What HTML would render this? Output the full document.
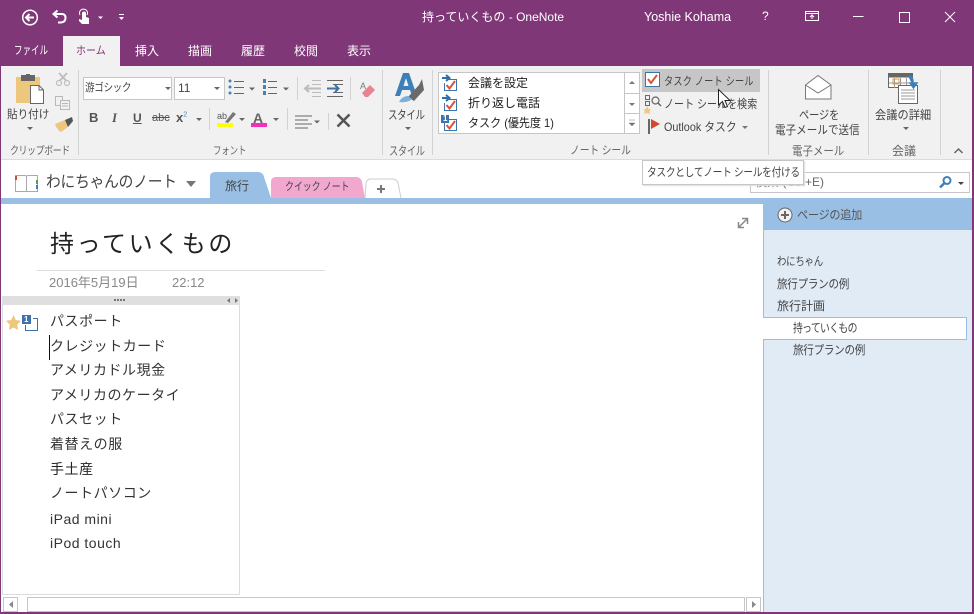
<!DOCTYPE html>
<html lang="ja"><head><meta charset="utf-8"><style>
html,body{margin:0;padding:0;width:974px;height:614px;overflow:hidden;background:#fff}
body{position:relative;font-family:"Liberation Sans","Noto Sans CJK JP",sans-serif;font-size:12px;color:#444}
.a{position:absolute}
.t{position:absolute;white-space:nowrap;line-height:16px;transform-origin:0 50%}
.w{color:#fff}
.g{color:#666}
.sep{position:absolute;width:1px;background:#d2d2d2}
.note{position:absolute;left:50px;white-space:nowrap;font-size:14px;letter-spacing:.55px;line-height:20px;color:#333}
.arr{position:absolute;width:0;height:0;border-left:3px solid transparent;border-right:3px solid transparent;border-top:3px solid #666}
svg{position:absolute;overflow:visible}
</style></head><body>
<!-- title bar -->
<div class="a" style="left:0;top:0;width:974px;height:66px;background:#803778"></div>
<div class="a" style="left:0;top:0;width:1px;height:614px;background:#803778;z-index:9"></div>
<div class="a" style="left:972px;top:0;width:2px;height:614px;background:#803778;z-index:9"></div>
<div class="a" style="left:0;top:612px;width:974px;height:2px;background:#803778;z-index:9"></div>
<svg style="left:0;top:0" width="140" height="36" fill="none" stroke="#fff">
<circle cx="30" cy="17.500" r="7.300" stroke-width="1.500"/>
<path d="M34 17.500H26M29.500 14L26 17.500L29.500 21" stroke-width="2"/>
<path d="M54 14H62Q65.500 14 65.500 18Q65.500 22 61 22.500H58M57.500 10.500L53.500 14L57.500 17.500" stroke-width="2"/>
<path d="M82 20V13.500a2 2 0 0 1 4 0V17L89 18V24H82L79 21V19Z" fill="#fff" stroke="none"/>
<path d="M80 15A4 4 0 1 1 87 15" stroke-width="1"/>
<path d="M98 16.500H103L100.500 19Z" fill="#fff" stroke="none"/>
<path d="M119 14.500H124" stroke-width="1"/><path d="M119 17H124L121.500 20Z" fill="#fff" stroke="none"/>
</svg>
<div class="t w" style="left:422px;top:9px;font-size:12px">持っていくもの - OneNote</div>
<div class="t w" style="left:644px;top:9px;font-size:12.500px">Yoshie Kohama</div>
<div class="t w" style="left:762px;top:8px;font-size:12px">?</div>
<svg style="left:800px;top:8px" width="170" height="20" fill="none" stroke="#fff" stroke-width="1">
<path d="M5.500 3.500H18.500V12.500H5.500ZM5.500 5.500H18.500M12 11V7M10 9L12 7L14 9"/>
<path d="M53 8.500H63.500"/>
<path d="M99.500 4.500H109.500V14.500H99.500Z"/>
<path d="M145 4L155 14M155 4L145 14"/>
</svg>
<!-- ribbon tabs -->
<div class="a" style="left:63px;top:36px;width:57px;height:30px;background:#f1f1f1"></div>
<div class="t w" style="left:14px;top:43px;font-size:11.500px;transform:scaleX(.74)">ファイル</div>
<div class="t" style="left:76px;top:43px;font-size:11px;color:#803778;transform:scaleX(.91)">ホーム</div>
<div class="t w" style="left:135px;top:43px">挿入</div>
<div class="t w" style="left:188px;top:43px">描画</div>
<div class="t w" style="left:241px;top:43px">履歴</div>
<div class="t w" style="left:294px;top:43px">校閲</div>
<div class="t w" style="left:347px;top:43px">表示</div>
<!-- ribbon -->
<div class="a" style="left:1px;top:66px;width:971px;height:93px;background:#f1f1f1"></div>
<div class="a" style="left:1px;top:159px;width:971px;height:1px;background:#dcdcdc"></div>
<div class="sep" style="left:78px;top:70px;height:85px"></div>
<div class="sep" style="left:382px;top:70px;height:85px"></div>
<div class="sep" style="left:432px;top:70px;height:85px"></div>
<div class="sep" style="left:768px;top:70px;height:85px"></div>
<div class="sep" style="left:868px;top:70px;height:85px"></div>
<div class="sep" style="left:940px;top:70px;height:85px"></div>
<!-- clipboard -->
<svg style="left:0;top:66px" width="80" height="70" fill="none">
<rect x="16" y="11" width="24" height="26" fill="#eec77f"/>
<rect x="21" y="9" width="14" height="6" fill="#666"/><rect x="26" y="8" width="4" height="3" fill="#666"/>
<path d="M30.500 19.500H39L43.500 24V37.500H30.500Z" fill="#fff" stroke="#666"/>
<path d="M39 19.500V24H43.500" stroke="#666"/>
<g stroke="#bdbdbd" stroke-width="1.200"><circle cx="59" cy="17" r="2.500"/><circle cx="67" cy="17" r="2.500"/><path d="M60 14.500L67 7M66 14.500L59 7" stroke-width="1.800"/></g>
<g stroke="#b8b8b8"><rect x="55.500" y="30.500" width="7" height="9"/><path d="M60.500 34.500H69.500V43.500H60.500Z" fill="#f1f1f1"/><path d="M62 37.500H68M62 40H68"/></g>
<path d="M55 58L65 54L68 61L61 66Q57 64 55 58Z" fill="#eec77f"/>
<path d="M65 54L72 51L73 55L68 61Z" fill="#555"/>
</svg>
<div class="t" style="left:7px;top:107px;font-size:11.500px;color:#444;transform:scaleX(.92)">貼り付け</div>
<div class="arr" style="left:27px;top:127px"></div>
<div class="t g" style="left:10px;top:143px;font-size:11px;letter-spacing:-.6px;transform:scaleX(.82)">クリップボード</div>
<!-- font -->
<div class="a" style="left:83px;top:77px;width:89px;height:23px;border:1px solid #c6c6c6;background:#fff;box-sizing:border-box"></div>
<div class="a" style="left:174px;top:77px;width:51px;height:23px;border:1px solid #c6c6c6;background:#fff;box-sizing:border-box"></div>
<div class="t" style="left:85px;top:80px;font-size:11px;letter-spacing:-.4px;color:#444;transform:scaleX(.87)">游ゴシック</div>
<div class="t" style="left:178px;top:80px;font-size:12px">11</div>
<div class="arr" style="left:165px;top:87px"></div><div class="arr" style="left:214px;top:87px"></div>
<svg style="left:225px;top:70px" width="160" height="68" fill="none" stroke="#666">
<path d="M9 11.500H19M9 17.500H19M9 23.500H19"/>
<g fill="#4a7fb5" stroke="none"><circle cx="5" cy="11" r="1.500"/><circle cx="5" cy="17" r="1.500"/><circle cx="5" cy="23" r="1.500"/>
<rect x="38" y="9" width="3" height="4"/><rect x="38" y="15" width="3" height="4"/><rect x="38" y="21" width="3" height="4"/></g>
<path d="M43 11.500H52M43 17.500H52M43 23.500H52"/>
<path d="M24 17.500H30L27 20.500ZM58 17.500H64L61 20.500Z" fill="#666" stroke="none"/>
<path d="M72.500 7V30" stroke="#d2d2d2"/>
<path d="M87 10.500H96M87 14.500H96M87 22.500H96M87 26.500H96" stroke="#bbb"/>
<path d="M80 18.500H96M84 15L80 18.500L84 22" stroke="#bbb" stroke-width="2"/>
<path d="M102 10.500H118M108 14.500H118M108 22.500H118M102 26.500H118"/>
<path d="M102 18.500H113M110 15L113.500 18.500L110 22" stroke="#3a74ad" stroke-width="2"/>
<path d="M125.500 7V30" stroke="#d2d2d2"/>
<path d="M137 23L145 15L150 20L143 27H140Z" fill="#e8838f" stroke="none"/>
<path d="M70 46H87M70 50H83M70 54H87M70 58H83"/>
<path d="M89 50.500H95L92 53.500Z" fill="#666" stroke="none"/>
<path d="M103.500 43V60" stroke="#d2d2d2"/>
<path d="M112.500 44.500L124.500 56.500M124.500 44.500L112.500 56.500" stroke="#555" stroke-width="2.500"/>
</svg>
<div class="t" style="left:360px;top:78px;font-size:9px;color:#777">A</div>
<div class="t" style="left:89px;top:110px;font-size:13px;font-weight:bold;color:#555">B</div>
<div class="t" style="left:112px;top:110px;font-size:13px;font-style:italic;font-family:'Liberation Serif',serif;font-weight:bold;color:#555">I</div>
<div class="t" style="left:133px;top:110px;font-size:12px;font-weight:bold;text-decoration:underline;color:#555">U</div>
<div class="t" style="left:152px;top:110px;font-size:11px;text-decoration:line-through;color:#555">abc</div>
<div class="t" style="left:176px;top:110px;font-size:13px;font-weight:bold;color:#555">x<sup style="font-size:7px;color:#4a7fb5;font-weight:normal;line-height:0">2</sup></div>
<div class="arr" style="left:196px;top:118px"></div>
<div class="sep" style="left:209px;top:108px;height:22px"></div>
<div class="t" style="left:217px;top:108px;font-size:9px;color:#555">ab</div>
<svg style="left:217px;top:108px" width="20" height="18"><path d="M8 14L16 4L19 6L11 15Z" fill="#777"/></svg>
<div class="a" style="left:217px;top:123px;width:16px;height:4px;background:#ff0"></div>
<div class="arr" style="left:239px;top:118px"></div>
<div class="t" style="left:253px;top:110px;font-size:14px;font-weight:bold;color:#666">A</div>
<div class="a" style="left:251px;top:123px;width:16px;height:4px;background:#f72cbe"></div>
<div class="arr" style="left:273px;top:118px"></div>
<div class="sep" style="left:287px;top:108px;height:22px"></div>
<div class="t g" style="left:213px;top:143px;font-size:11px;letter-spacing:-.2px;transform:scaleX(.77)">フォント</div>
<!-- style -->
<svg style="left:394px;top:70px" width="36" height="36">
<path d="M1 26L9 3H15L23 26H18L16 20H8L6 26ZM9.500 16H14.500L12 8Z" fill="#3f7fb8"/>
<path d="M14 27L25 15L28 9L30 20L20 31Z" fill="#6a6a6a"/>
<path d="M5 32Q8 26 14 26L18 29Q14 33 5 32Z" fill="#7ab0dc"/></svg>
<div class="t" style="left:388px;top:107px;font-size:12px;letter-spacing:-.4px;color:#444;transform:scaleX(.79)">スタイル</div>
<div class="arr" style="left:405px;top:127px"></div>
<div class="t g" style="left:389px;top:143px;font-size:12px;letter-spacing:-.4px;transform:scaleX(.77)">スタイル</div>
<!-- tags gallery -->
<div class="a" style="left:438px;top:72px;width:202px;height:62px;background:#fff;border:1px solid #c6c6c6;box-sizing:border-box"></div>
<div class="a" style="left:624px;top:72px;width:16px;height:62px;border-left:1px solid #c6c6c6;box-sizing:border-box"></div>
<div class="a" style="left:624px;top:93px;width:16px;height:1px;background:#c6c6c6"></div>
<div class="a" style="left:624px;top:113px;width:16px;height:1px;background:#c6c6c6"></div>
<svg style="left:438px;top:72px" width="202" height="62" fill="none">
<g><path d="M10 7.500H18.500V18.500H6.500V11" stroke="#3a74ad"/><path d="M8.500 13L11.500 16.500L17 9" stroke="#d9533a" stroke-width="2"/><path d="M4 6H11M8 3L11.500 6L8 9" stroke="#2f6fa8" stroke-width="2"/></g>
<g transform="translate(0,20)"><path d="M10 7.500H18.500V18.500H6.500V11" stroke="#3a74ad"/><path d="M8.500 13L11.500 16.500L17 9" stroke="#d9533a" stroke-width="2"/><path d="M4 6H11M8 3L11.500 6L8 9" stroke="#2f6fa8" stroke-width="2"/></g>
<g transform="translate(0,40)"><path d="M10 7.500H18.500V18.500H6.500V11" stroke="#3a74ad"/><path d="M8.500 13L11.500 16.500L17 9" stroke="#d9533a" stroke-width="2"/><rect x="3" y="3" width="8" height="8" fill="#3f72ad"/></g>
<path d="M191 12L194 9L197 12Z" fill="#777"/><path d="M191 31H197L194 34Z" fill="#777"/>
<path d="M191 48H197M191 51H197L194 54Z" stroke="#777" stroke-width=".5" fill="#777"/>
</svg>
<div class="t" style="left:443px;top:111px;font-size:8px;font-weight:bold;color:#fff">1</div>
<div class="t" style="left:468px;top:75px;font-size:12px;color:#222">会議を設定</div>
<div class="t" style="left:468px;top:95px;font-size:12px;color:#222">折り返し電話</div>
<div class="t" style="left:468px;top:115px;font-size:12px;color:#222;transform:scaleX(.92)">タスク (優先度 1)</div>
<div class="t g" style="left:570px;top:143px;font-size:11.500px;letter-spacing:-.1px;transform:scaleX(.85)">ノート シール</div>
<!-- tags buttons -->
<div class="a" style="left:642px;top:69px;width:118px;height:23px;background:#c6c6c6"></div>
<svg style="left:642px;top:69px" width="22" height="22"><rect x="3.500" y="3.500" width="14" height="14" fill="#fff" stroke="#3a74ad"/><path d="M6 10L9 14L15 6" fill="none" stroke="#d9533a" stroke-width="2"/></svg>
<div class="t" style="left:664px;top:74px;font-size:11.500px;letter-spacing:.2px;transform:scaleX(.8)">タスク ノート シール</div>
<svg style="left:644px;top:94px" width="20" height="20" fill="none"><rect x="1.500" y="1.500" width="4" height="4" stroke="#3a74ad"/><rect x="1.500" y="7.500" width="4" height="4" stroke="#3a74ad"/><path d="M3 12L4.500 15L7 15.500L5.500 17.500L6 20L3 19L0 20L1 17.500L-.5 15.500L2 15Z" fill="#eec77f"/><circle cx="11.500" cy="6.500" r="3.500" stroke="#666" stroke-width="1.200"/><path d="M14 9L17 12" stroke="#666" stroke-width="1.500"/></svg>
<div class="t" style="left:664px;top:96px;font-size:12px;letter-spacing:.1px;transform:scaleX(.83)">ノート シールを検索</div>
<svg style="left:648px;top:118px" width="16" height="18"><rect x="0" y="1" width="2" height="15" fill="#666"/><path d="M3 1L12 6L3 11Z" fill="#d2492f"/></svg>
<div class="t" style="left:664px;top:119px;font-size:12px;transform:scaleX(.9)">Outlook タスク</div>
<div class="arr" style="left:742px;top:126px;border-top-color:#777"></div>
<!-- email -->
<svg style="left:804px;top:74px" width="30" height="28" fill="none" stroke="#777"><path d="M1.500 11L14 1.500L27 11V25H1.500Z" fill="#fff"/><path d="M1.500 11L14 19L27 11"/></svg>
<div class="t" style="left:799px;top:107px;font-size:12px;letter-spacing:-.1px;transform:scaleX(.85)">ページを</div>
<div class="t" style="left:775px;top:122px;font-size:11.800px;letter-spacing:.1px;transform:scaleX(.89)">電子メールで送信</div>
<div class="t g" style="left:792px;top:143px;font-size:12px;transform:scaleX(.87)">電子メール</div>
<!-- meeting -->
<svg style="left:888px;top:73px" width="32" height="32" fill="none"><rect x=".5" y=".5" width="24" height="14" fill="#fff" stroke="#666"/><rect x=".5" y=".5" width="24" height="4" fill="#666"/><path d="M6.500 5V15M12.500 5V15M18.500 5V15M1 10H24" stroke="#999"/><rect x="5" y="6" width="6" height="5" stroke="#e59a3c"/><rect x="10.500" y="12.500" width="19" height="18" fill="#fff" stroke="#666"/><path d="M13 17H27M13 20H27M13 23H27M13 26H27" stroke="#999"/><path d="M20 3Q25 3 25 9V13M22 10L25.500 15L29 10Z" fill="#3f7fb8" stroke="#3f7fb8" stroke-width="1.500"/></svg>
<div class="t" style="left:875px;top:107px;font-size:12px;letter-spacing:.1px;transform:scaleX(.93)">会議の詳細</div>
<div class="arr" style="left:903px;top:127px"></div>
<div class="t g" style="left:892px;top:143px;font-size:12px">会議</div>
<svg style="left:953px;top:146px" width="14" height="10" fill="none"><path d="M1.500 7L5.500 3L9.500 7" stroke="#666" stroke-width="1.500"/></svg>
<!-- notebook bar -->
<svg style="left:15px;top:174px" width="24" height="19" fill="none"><path d="M.5 1.500H10.500L11.500 2.500L12.500 1.500H22.500V17.500H.5Z" stroke="#aaa" stroke-width="1"/><path d="M11.500 2.500V17" stroke="#aaa"/><rect x="0" y="2" width="2" height="4" fill="#d2492f"/><rect x="21" y="6" width="2" height="4" fill="#5a9a5a"/><rect x="21" y="11" width="2" height="4" fill="#3f7fb8"/></svg>
<div class="t" style="left:46px;top:175px;font-size:16px;letter-spacing:-.2px;color:#444;transform:scaleX(.92)">わにちゃんのノート</div>
<div class="a" style="left:186px;top:181px;width:0;height:0;border-left:5px solid transparent;border-right:5px solid transparent;border-top:6px solid #777"></div>
<svg style="left:200px;top:168px" width="210" height="32">
<path d="M10 30V9Q10 4 15 4H58Q63 4 64 9L71 30Z" fill="#9abfe5"/>
<path d="M71 30L71 14Q71 9 76 9H156Q161 9 162 14L165 30Z" fill="#f2a7cf"/>
<path d="M165 30L166 15Q167 11 171 11H192Q197 11 198 15L201 30" fill="#fff" stroke="#ccc"/>
<path d="M181 17V25M177 21H185" stroke="#777" stroke-width="2"/>
</svg>
<div class="t" style="left:225px;top:178px;font-size:12px;color:#444">旅行</div>
<div class="t" style="left:285px;top:179px;font-size:11px;letter-spacing:-.2px;color:#444;transform:scaleX(.82)">クイック ノート</div>
<div class="a" style="left:1px;top:198px;width:971px;height:6px;background:#9abfe5"></div>
<!-- search -->
<div class="a" style="left:750px;top:172px;width:220px;height:21px;border:1px solid #c6c6c6;background:#fff;box-sizing:border-box"></div>
<div class="t g" style="left:755px;top:174px;font-size:12px">検索 (Ctrl+E)</div>
<svg style="left:938px;top:175px" width="16" height="15" fill="none"><circle cx="9" cy="5.500" r="3.500" stroke="#3f7fb8" stroke-width="2"/><path d="M6.500 8L2 12.500" stroke="#3f7fb8" stroke-width="2.500"/></svg>
<div class="arr" style="left:958px;top:182px;border-top-color:#444"></div>
<!-- tooltip -->
<div class="a" style="left:642px;top:160px;width:162px;height:25px;background:#fff;border:1px solid #c6c6c6;box-sizing:border-box;box-shadow:1px 1px 1px #ddd;z-index:3"></div>
<div class="t" style="left:647px;top:165px;font-size:11.500px;letter-spacing:-.35px;color:#444;z-index:4;transform:scaleX(.845)">タスクとしてノート シールを付ける</div>
<!-- cursor -->
<svg style="left:718px;top:89px;z-index:5" width="16" height="22"><path d="M.5 .5V16L4.500 12.500L7 18.500L9.500 17.500L7 11.500H12Z" fill="#fff" stroke="#222"/></svg>
<!-- page -->
<div class="t" style="left:50px;top:228px;font-size:24px;line-height:34px;letter-spacing:2.600px;color:#222">持っていくもの</div>
<div class="a" style="left:37px;top:270px;width:288px;height:1px;background:#dcdcdc"></div>
<div class="t" style="left:49px;top:275px;font-size:13px;color:#888">2016年5月19日</div>
<div class="t" style="left:172px;top:275px;font-size:13px;color:#888">22:12</div>
<svg style="left:736px;top:216px" width="14" height="14" fill="none" stroke="#888"><path d="M3 11L11 3" stroke-width="1.500"/><path d="M6 2.500H11.500V8M2.500 6V11.500H8" stroke-width="1.500"/></svg>
<!-- note container -->
<div class="a" style="left:2px;top:296px;width:238px;height:299px;border:1px solid #dcdcdc;border-top:0;box-sizing:border-box"></div>
<div class="a" style="left:2px;top:296px;width:238px;height:9px;background:#dfdfdf"></div>
<svg style="left:2px;top:296px" width="238" height="9"><g fill="#777"><rect x="112" y="3" width="2" height="2"/><rect x="115" y="3" width="2" height="2"/><rect x="118" y="3" width="2" height="2"/><rect x="121" y="3" width="2" height="2"/><path d="M228 2V7L225 4.500ZM233 2V7L236 4.500Z"/></g></svg>
<svg style="left:5px;top:314px" width="36" height="20" fill="none"><path d="M8.500 1L10.800 6L16 6.800L12.200 10.700L13.200 16L8.500 13.500L3.800 16L4.800 10.700L1 6.800L6.200 6Z" fill="#eec77f"/><path d="M28 4.500H32.500V16.500H20.500V11" stroke="#3f72ad"/><rect x="17" y="1" width="9" height="9" fill="#3f72ad"/></svg>
<div class="t" style="left:24px;top:315px;font-size:8px;font-weight:bold;line-height:10px;color:#fff">1</div>
<div class="note" style="top:311px">パスポート</div>
<div class="a" style="left:49px;top:335px;width:1px;height:25px;background:#111"></div>
<div class="note" style="top:336px">クレジットカード</div>
<div class="note" style="top:360px">アメリカドル現金</div>
<div class="note" style="top:385px">アメリカのケータイ</div>
<div class="note" style="top:409px">パスセット</div>
<div class="note" style="top:434px">着替えの服</div>
<div class="note" style="top:459px;color:#222">手土産</div>
<div class="note" style="top:483px">ノートパソコン</div>
<div class="note" style="top:509px;letter-spacing:.5px">iPad mini</div>
<div class="note" style="top:533px;letter-spacing:.5px">iPod touch</div>
<!-- right panel -->
<div class="a" style="left:763px;top:204px;width:209px;height:408px;background:#e1ebf6;border-left:1px solid #9abfe5;box-sizing:border-box"></div>
<div class="a" style="left:763px;top:198px;width:209px;height:32px;background:#9abfe5"></div>
<svg style="left:777px;top:207px" width="16" height="16" fill="none"><circle cx="8" cy="8" r="7" fill="#f1f1f1" stroke="#666"/><path d="M8 4V12M4 8H12" stroke="#666" stroke-width="2"/></svg>
<div class="t" style="left:797px;top:207px;font-size:12px;letter-spacing:-.3px;color:#555;transform:scaleX(.93)">ページの追加</div>
<div class="t" style="left:777px;top:254px;font-size:11.500px;letter-spacing:-.3px;color:#444;transform:scaleX(.82)">わにちゃん</div>
<div class="t" style="left:777px;top:276px;font-size:12px;letter-spacing:-.3px;color:#444;transform:scaleX(.88)">旅行プランの例</div>
<div class="t" style="left:777px;top:298px;font-size:12px;color:#444">旅行計画</div>
<div class="a" style="left:763px;top:317px;width:204px;height:23px;background:#fff;border:1px solid #9abfe5;border-left:0;box-sizing:border-box"></div>
<div class="t" style="left:793px;top:320px;font-size:12px;letter-spacing:-.8px;color:#444;transform:scaleX(.82)">持っていくもの</div>
<div class="t" style="left:793px;top:342px;font-size:12px;letter-spacing:-.3px;color:#444;transform:scaleX(.88)">旅行プランの例</div>
<!-- scrollbar -->
<div class="a" style="left:1px;top:597px;width:762px;height:15px;background:#fff"></div>
<div class="a" style="left:3px;top:597px;width:15px;height:15px;border:1px solid #c6c6c6;box-sizing:border-box"></div>
<div class="a" style="left:27px;top:597px;width:718px;height:15px;border:1px solid #c6c6c6;box-sizing:border-box"></div>
<div class="a" style="left:746px;top:597px;width:15px;height:15px;border:1px solid #c6c6c6;box-sizing:border-box"></div>
<svg style="left:3px;top:597px" width="760" height="15"><path d="M10 4V11L6 7.500ZM749 4V11L753 7.500Z" fill="#888"/></svg>
</body></html>
